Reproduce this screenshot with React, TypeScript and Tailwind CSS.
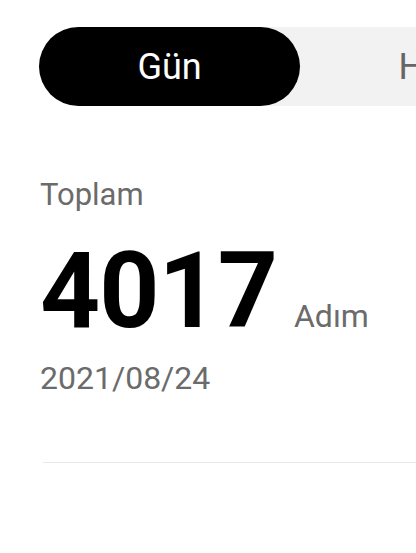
import React, { useState } from 'react';

const tabs = ['Gün', 'Hafta', 'Ay'];

const App: React.FC = () => {
  const [active, setActive] = useState(0);

  return (
    <div
      className="w-[416px] h-[553px] overflow-hidden bg-white"
      style={{ fontFamily: 'Roboto, "Noto Sans", sans-serif' }}
    >
      {/* Segmented tabs */}
      <div className="pt-[27px] pl-[39px]">
        <div className="flex w-max h-[79px] bg-[#f2f2f2] rounded-full">
          {tabs.map((tab, i) => (
            <button
              key={tab}
              type="button"
              onClick={() => setActive(i)}
              className={
                i === active
                  ? 'w-[261px] h-full rounded-full bg-black text-white text-[36px] leading-none'
                  : 'w-[286px] h-full rounded-full text-[#666666] text-[36px] leading-none'
              }
            >
              {tab}
            </button>
          ))}
        </div>
      </div>

      {/* Summary */}
      <div className="pl-[40px]">
        <div className="mt-[73px] text-[31px] leading-none text-[#6b6b6b]">Toplam</div>
        <div className="mt-[29px] flex items-baseline">
          <span className="text-[105px] leading-none font-bold text-black tracking-[-1px]">4017</span>
          <span className="ml-[17px] text-[32px] leading-none text-[#6b6b6b]">Adım</span>
        </div>
        <div className="mt-[18px] text-[32px] leading-none text-[#6b6b6b]">2021/08/24</div>
      </div>

      <div className="mt-[68px] ml-[43px] h-px bg-[#e8e8e8]" />
    </div>
  );
};

export default App;
